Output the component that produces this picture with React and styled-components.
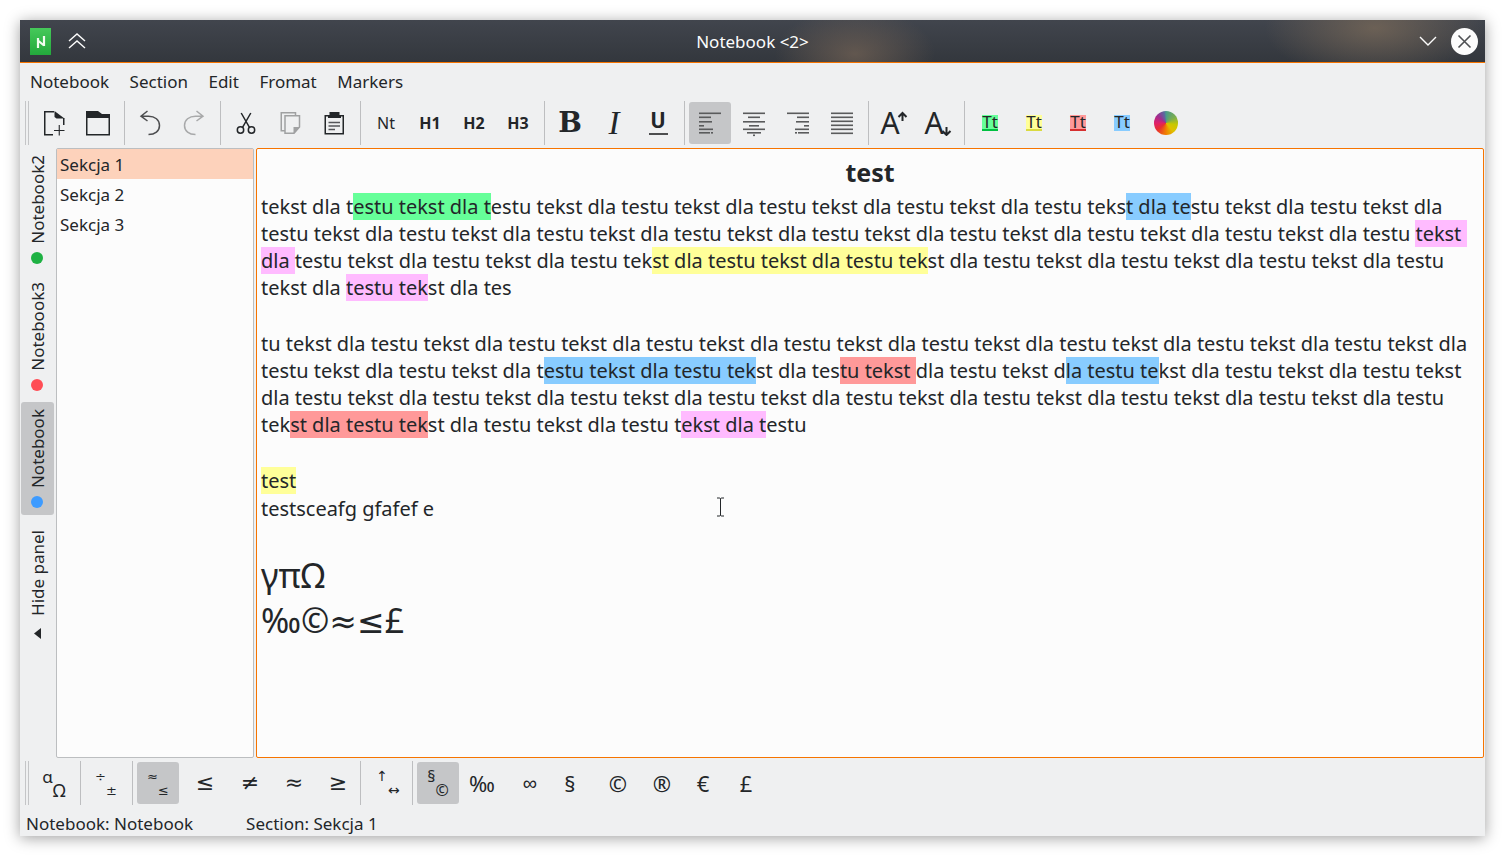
import React from 'react';
import styled, { createGlobalStyle } from 'styled-components';

const Global = createGlobalStyle`
  html, body { margin: 0; padding: 0; background: #fff; overflow: hidden; }
  body { font-family: "Noto Sans", sans-serif; color: #232629; }
`;

const Page = styled.div`
  padding: 20px;
  width: 1465px;
  height: 816px;
`;
const Win = styled.div`
  position: relative;
  width: 1465px;
  height: 816px;
  display: flex;
  flex-direction: column;
  background: #eff0f1;
  box-shadow: 0 2px 14px rgba(0, 0, 0, 0.38);
`;
const TitleBar = styled.header`
  height: 42px;
  flex: none;
  display: flex;
  align-items: center;
  border-bottom: 1px solid #f67400;
  padding: 0 7px 0 10px;
  background:
    radial-gradient(ellipse 110px 52px at 1355px 8px, rgba(125, 108, 90, 0.72), transparent),
    radial-gradient(ellipse 80px 46px at 835px 34px, rgba(125, 105, 88, 0.62), transparent),
    linear-gradient(#41454d, #33373d);
`;
const TitleText = styled.div`
  flex: 1;
  text-align: center;
  color: #fcfcfc;
  font-size: 17px;
  padding-top: 1px;
`;
const TitleIcon = styled.svg`
  display: block;
  flex: none;
  margin-left: ${p => p.$gap || 0}px;
`;
const MenuBar = styled.nav`
  height: 37px;
  flex: none;
  display: flex;
  align-items: center;
  gap: 20.5px;
  padding-left: 10px;
  font-size: 17px;
`;
const ToolBar = styled.div`
  height: 46px;
  flex: none;
  display: flex;
  align-items: center;
`;
const Handle = styled.div`
  width: 2px;
  height: 44px;
  margin: 0 3px 0 5px;
  border-left: 1px solid #c4c5c7;
  border-right: 1px solid #c4c5c7;
`;
const Sep = styled.div`
  width: 1px;
  height: 44px;
  margin: 0 3px 0 4px;
  background: #bdbec0;
  flex: none;
`;
const Btn = styled.div`
  position: relative;
  width: 42px;
  height: 42px;
  margin: 0 1px;
  flex: none;
  box-sizing: border-box;
  display: flex;
  align-items: center;
  justify-content: center;
  border-radius: 3px;
  padding-left: ${p => (p.$shift || 0) * 2}px;
  background: ${p => (p.$active ? '#c5c6c8' : 'transparent')};
`;
const Ico = styled.svg`
  display: block;
  width: 42px;
  height: 42px;
  fill: none;
  stroke: ${p => p.$color || '#232629'};
  stroke-width: 1.5;
`;
const HeadLabel = styled.span`
  font-size: 16px;
  font-weight: ${p => (p.$bold ? 700 : 400)};
`;
const BoldGlyph = styled.span`
  font-family: "DejaVu Serif", serif;
  font-weight: 700;
  font-size: 28px;
  line-height: 1;
`;
const ItalicGlyph = styled.span`
  font-family: "Liberation Serif", serif;
  font-style: italic;
  font-size: 33px;
  line-height: 24px;
  width: 14px;
  text-align: center;
`;
const UnderGlyph = styled.span`
  font-family: Roboto, sans-serif;
  font-weight: 700;
  font-size: 22px;
  line-height: 20px;
  width: 19px;
  text-align: center;
  border-bottom: 2px solid #4d4e4f;
  padding-bottom: 2px;
`;
const FontGlyph = styled.span`
  font-size: 30px;
  line-height: 30px;
  display: flex;
  align-items: center;
`;
const SmallArrow = styled.svg`
  display: block;
  width: 11px;
  height: 26px;
  margin-left: -3px;
  fill: none;
  stroke: #232629;
  stroke-width: 2;
`;
const MarkerGlyph = styled.span`
  width: 16px;
  height: 16px;
  box-sizing: border-box;
  display: flex;
  align-items: center;
  justify-content: center;
  font-size: 17px;
  line-height: 16px;
  background: ${p => p.$bg};
  border-bottom: 2px solid ${p => p.$line};
`;
const Wheel = styled.span`
  width: 24px;
  height: 24px;
  border-radius: 50%;
  background: conic-gradient(#4a9a8a, #7fb04a 60deg, #c8c800 100deg, #e0c000 140deg, #f08000 180deg, #e83030 230deg, #e0206a 270deg, #a02c90 310deg, #5a6aa0 350deg, #4a9a8a);
`;
const Main = styled.div`
  flex: 1;
  min-height: 0;
  display: flex;
  margin-top: 2px;
  padding-right: 1px;
`;
const Strip = styled.aside`
  width: 36px;
  flex: none;
  box-sizing: border-box;
  padding-left: 1px;
  display: flex;
  flex-direction: column;
  gap: 4px;
`;
const Tab = styled.div`
  width: 33px;
  box-sizing: border-box;
  padding: 7px 0 7px;
  margin-top: ${p => p.$push || 0}px;
  display: flex;
  flex-direction: column;
  align-items: center;
  gap: 8px;
  border-radius: 3px;
  background: ${p => (p.$active ? '#c5c6c8' : 'transparent')};
`;
const TabText = styled.span`
  writing-mode: vertical-rl;
  transform: rotate(180deg);
  font-size: 17px;
  line-height: 22px;
  white-space: nowrap;
`;
const Dot = styled.span`
  width: 12px;
  height: 12px;
  border-radius: 50%;
  margin-left: -1px;
  background: ${p => p.$c};
`;
const Tri = styled.svg`
  display: block;
  width: 7px;
  height: 11px;
  margin: 4px 0 0 -1px;
  fill: #232629;
`;
const List = styled.div`
  width: 198px;
  flex: none;
  box-sizing: border-box;
  background: #fcfcfc;
  border: 1px solid #bcbec0;
  border-radius: 2px;
`;
const ListItem = styled.div`
  height: 30px;
  line-height: 32px;
  padding-left: 3px;
  font-size: 17px;
  background: ${p => (p.$on ? '#fdd2bb' : 'transparent')};
`;
const Editor = styled.main`
  flex: 1;
  margin-left: 2px;
  box-sizing: border-box;
  background: #fcfcfc;
  border: 1px solid #f67400;
  border-radius: 2px;
  padding: 3px 4px 0;
  font-size: 19.985px;
`;
const DocTitle = styled.div`
  text-align: center;
  font-weight: 700;
  font-size: 25px;
  line-height: 41px;
  height: 41px;
`;
const Line = styled.div`
  white-space: pre;
  line-height: 27px;
  height: ${p => p.$h || 27}px;
`;
const BigLine = styled.div`
  white-space: pre;
  font-size: 34px;
  line-height: 45px;
  height: 45px;
`;
const Wide = styled.span`
  font-family: "DejaVu Sans", sans-serif;
  font-size: 33px;
`;
const Hl = styled.span`
  background: ${p => p.$c};
`;
const Cursor = styled.svg`
  position: absolute;
  left: 696px;
  top: 477px;
  width: 9px;
  height: 20px;
  fill: none;
  stroke: #232629;
  stroke-width: 1;
`;
const SymbolBar = styled(ToolBar)`
  margin-top: 2px;
`;
const Pair = styled.span`
  display: grid;
  grid-template-columns: auto auto;
  grid-template-rows: 13px 14px;
  height: 27px;
  font-family: ${p => p.$font || '"Noto Sans"'}, sans-serif;
`;
const PairTop = styled.span`
  grid-row: 1;
  grid-column: 1;
  font-size: ${p => p.$size || 15}px;
  line-height: 13px;
`;
const PairBottom = styled.span`
  grid-row: 2;
  grid-column: 2;
  font-size: ${p => p.$size || 15}px;
  line-height: 15px;
`;
const Sym = styled.span`
  font-size: ${p => p.$size || 22}px;
  font-family: ${p => p.$font || '"Noto Sans"'}, sans-serif;
  line-height: 30px;
`;
const Status = styled.footer`
  flex: none;
  height: 30px;
  box-sizing: border-box;
  display: flex;
  align-items: center;
  gap: 53px;
  padding: 4px 0 0 6px;
  font-size: 17px;
`;

const COL = { g: '#66ff99', b: '#88ccff', y: '#ffff99', p: '#ffbbff', r: '#ff9999' };

const rich = s =>
  s.split(/(\[[gbypr]\|[^\]]*\])/).map((part, i) => {
    const m = part.match(/^\[([gbypr])\|([^\]]*)\]$/);
    return m ? <Hl key={i} $c={COL[m[1]]}>{m[2]}</Hl> : <React.Fragment key={i}>{part}</React.Fragment>;
  });

const DOC = [
  ['tekst dla t[g|estu tekst dla t]estu tekst dla testu tekst dla testu tekst dla testu tekst dla testu teks[b|t dla te]stu tekst dla testu tekst dla'],
  ['testu tekst dla testu tekst dla testu tekst dla testu tekst dla testu tekst dla testu tekst dla testu tekst dla testu tekst dla testu [p|tekst ]'],
  ['[p|dla ]testu tekst dla testu tekst dla testu tek[y|st dla testu tekst dla testu tek]st dla testu tekst dla testu tekst dla testu tekst dla testu'],
  ['tekst dla [p|testu tek]st dla tes'],
  [' ', 29],
  ['tu tekst dla testu tekst dla testu tekst dla testu tekst dla testu tekst dla testu tekst dla testu tekst dla testu tekst dla testu tekst dla'],
  ['testu tekst dla testu tekst dla t[b|estu tekst dla testu tek]st dla tes[r|tu tekst ]dla testu tekst d[b|la testu te]kst dla testu tekst dla testu tekst'],
  ['dla testu tekst dla testu tekst dla testu tekst dla testu tekst dla testu tekst dla testu tekst dla testu tekst dla testu tekst dla testu'],
  ['tek[r|st dla testu tek]st dla testu tekst dla testu t[p|ekst dla t]estu'],
  [' ', 29],
  ['[y|test]', 28],
  ['testsceafg gfafef e'],
  [' ', 31],
];

const Rows = ({ rows, color = '#5a5b5c' }) => (
  <Ico viewBox="0 0 42 42">
    {rows.map(([x, y, w], i) => (
      <rect key={i} x={x} y={y} width={w} height="1.6" fill={color} stroke="none" />
    ))}
  </Ico>
);

const NewIcon = () => (
  <Ico viewBox="0 0 42 42">
    <path d="M21 9.75H11.75V32.75H20M30.75 16V23" />
    <path d="M21.5 9L31.5 16.5H23.5L21.5 15Z" fill="#232629" stroke="none" />
    <path d="M21 28.5H31.5M26.25 23V33.5" strokeWidth="1.1" />
  </Ico>
);
const FolderIcon = () => (
  <Ico viewBox="0 0 42 42">
    <path d="M9 9H21L25 12H33V16H9Z" fill="#232629" stroke="none" />
    <path d="M9.75 15V32.75H32.25V15" />
  </Ico>
);
const UndoIcon = ({ color }) => (
  <Ico viewBox="0 0 42 42" $color={color}>
    <path d="M18.5 9L12 14.2L18.5 19M12 14.2H19.5C26 14.2 30.5 18 30.5 23.5C30.5 29 26 32.5 19.5 32.5" />
  </Ico>
);
const RedoIcon = ({ color }) => (
  <Ico viewBox="0 0 42 42" $color={color}>
    <path d="M23.5 9L30 14.2L23.5 19M30 14.2H22.5C16 14.2 11.5 18 11.5 23.5C11.5 29 16 32.5 22.5 32.5" />
  </Ico>
);
const CutIcon = () => (
  <Ico viewBox="0 0 42 42">
    <circle cx="15.5" cy="28" r="3.2" />
    <circle cx="26.5" cy="28" r="3.2" />
    <path d="M16.2 11L24.6 25.6M25.8 11L17.4 25.6" />
  </Ico>
);
const CopyIcon = () => (
  <Ico viewBox="0 0 42 42" $color="#a0a1a2">
    <path d="M16 28.75H12.25V10.75H26.5V13.5" />
    <path d="M16 13.75H30.5V25L25 31.25H16Z" />
    <path d="M24.5 25H31L24.5 32Z" fill="#a0a1a2" stroke="none" />
  </Ico>
);
const PasteIcon = () => (
  <Ico viewBox="0 0 42 42">
    <path d="M16 13.75H12.25V31.75H30.25V13.75H27" />
    <path d="M16.5 10H26.5V13H28V16H15V13H16.5Z" fill="#232629" stroke="none" />
    <path d="M15.5 20.5H27M15.5 24H27M15.5 27.5H22" strokeWidth="1.3" stroke="#55565a" />
  </Ico>
);

const Marker = ({ bg, line }) => (
  <Btn>
    <MarkerGlyph $bg={bg} $line={line}>Tt</MarkerGlyph>
  </Btn>
);

export default function App() {
  return (
    <Page>
      <Global />
      <Win>
        <TitleBar>
          <TitleIcon width="21" height="27" viewBox="0 0 21 27">
            <defs>
              <linearGradient id="lg" x1="0" y1="0" x2="0" y2="1">
                <stop offset="0" stopColor="#46c95a" />
                <stop offset="1" stopColor="#23a93c" />
              </linearGradient>
            </defs>
            <rect width="21" height="27" fill="url(#lg)" />
            <path d="M8 20V10M8 12.5L14 17.5M14 8V18" fill="none" stroke="#f2fdf0" strokeWidth="2.2" />
          </TitleIcon>
          <TitleIcon width="18" height="16" viewBox="0 0 18 16" $gap={17}>
            <path d="M1 8L9 1L17 8M1 15L9 8L17 15" fill="none" stroke="#fcfcfc" strokeWidth="1.4" />
          </TitleIcon>
          <TitleText>Notebook &lt;2&gt;</TitleText>
          <TitleIcon width="18" height="10" viewBox="0 0 18 10">
            <path d="M1 1L9 9L17 1" fill="none" stroke="#fcfcfc" strokeWidth="1.4" />
          </TitleIcon>
          <TitleIcon width="27" height="27" viewBox="0 0 27 27" $gap={14}>
            <circle cx="13.5" cy="13.5" r="13.5" fill="#fcfcfc" />
            <path d="M7.5 7.5L19.5 19.5M19.5 7.5L7.5 19.5" stroke="#4d4f52" strokeWidth="1.6" />
          </TitleIcon>
        </TitleBar>

        <MenuBar>
          <span>Notebook</span>
          <span>Section</span>
          <span>Edit</span>
          <span>Fromat</span>
          <span>Markers</span>
        </MenuBar>

        <ToolBar>
          <Handle />
          <Btn><NewIcon /></Btn>
          <Btn><FolderIcon /></Btn>
          <Sep />
          <Btn><UndoIcon color="#4d4e50" /></Btn>
          <Btn><RedoIcon color="#a8a9aa" /></Btn>
          <Sep />
          <Btn><CutIcon /></Btn>
          <Btn><CopyIcon /></Btn>
          <Btn><PasteIcon /></Btn>
          <Sep />
          <Btn><HeadLabel>Nt</HeadLabel></Btn>
          <Btn><HeadLabel $bold>H1</HeadLabel></Btn>
          <Btn><HeadLabel $bold>H2</HeadLabel></Btn>
          <Btn><HeadLabel $bold>H3</HeadLabel></Btn>
          <Sep />
          <Btn><BoldGlyph>B</BoldGlyph></Btn>
          <Btn><ItalicGlyph>I</ItalicGlyph></Btn>
          <Btn><UnderGlyph>U</UnderGlyph></Btn>
          <Sep />
          <Btn $active><Rows rows={[[10, 10.5, 22], [10, 14.5, 12], [10, 19, 13], [10, 23, 5], [10, 26.5, 14], [10, 30, 11], [22, 30, 2]]} /></Btn>
          <Btn><Rows rows={[[10, 10.5, 22], [15, 14.5, 12], [10, 19, 22], [16, 23, 10], [10, 26.5, 22], [14, 30, 14], [20, 32.5, 2]]} /></Btn>
          <Btn><Rows rows={[[10, 10.5, 22], [20, 14.5, 12], [19, 19, 13], [27, 23, 5], [18, 26.5, 14], [21, 30, 11], [18, 30, 2]]} /></Btn>
          <Btn><Rows rows={[[10, 10.5, 22], [10, 14.5, 22], [10, 18.5, 22], [10, 22.5, 22], [10, 26.5, 22], [10, 30.5, 22]]} /></Btn>
          <Sep />
          <Btn>
            <FontGlyph>A<SmallArrow viewBox="0 0 11 26"><path d="M5.5 11V3.2M1.5 7L5.5 3L9.5 7" /></SmallArrow></FontGlyph>
          </Btn>
          <Btn>
            <FontGlyph>A<SmallArrow viewBox="0 0 11 26"><path d="M5.5 17V24.8M1.5 21L5.5 25L9.5 21" /></SmallArrow></FontGlyph>
          </Btn>
          <Sep />
          <Marker bg="#66ff99" line="#00c040" />
          <Marker bg="#ffff99" line="#dada40" />
          <Marker bg="#ff9999" line="#d63030" />
          <Marker bg="#88ccff" line="#88ccff" />
          <Btn><Wheel /></Btn>
        </ToolBar>

        <Main>
          <Strip>
            <Tab><TabText>Notebook2</TabText><Dot $c="#1eb143" /></Tab>
            <Tab><TabText>Notebook3</TabText><Dot $c="#ff4d55" /></Tab>
            <Tab $active><TabText>Notebook</TabText><Dot $c="#3d9bff" /></Tab>
            <Tab $push={4}><TabText>Hide panel</TabText><Tri viewBox="0 0 7 11"><path d="M7 0V11L0 5.5Z" /></Tri></Tab>
          </Strip>
          <List>
            <ListItem $on>Sekcja 1</ListItem>
            <ListItem>Sekcja 2</ListItem>
            <ListItem>Sekcja 3</ListItem>
          </List>
          <Editor>
            <DocTitle>test</DocTitle>
            {DOC.map(([l, h], i) => <Line key={i} $h={h}>{rich(l)}</Line>)}
            <BigLine>γπΩ</BigLine>
            <BigLine>‰©<Wide>≈≤</Wide>£</BigLine>
          </Editor>
        </Main>

        <SymbolBar>
          <Handle />
          <Btn><Pair><PairTop $size={17}>α</PairTop><PairBottom $size={18}>Ω</PairBottom></Pair></Btn>
          <Sep />
          <Btn><Pair $font='"DejaVu Sans"'><PairTop $size={13}>÷</PairTop><PairBottom $size={13}>±</PairBottom></Pair></Btn>
          <Sep />
          <Btn $active><Pair $font='"DejaVu Sans"'><PairTop $size={13}>≈</PairTop><PairBottom $size={13}>≤</PairBottom></Pair></Btn>
          <Btn $shift={3}><Sym $font='"DejaVu Sans"'>≤</Sym></Btn>
          <Btn $shift={4}><Sym $font='"DejaVu Sans"'>≠</Sym></Btn>
          <Btn $shift={4}><Sym $font='"DejaVu Sans"'>≈</Sym></Btn>
          <Btn $shift={4}><Sym $font='"DejaVu Sans"'>≥</Sym></Btn>
          <Sep />
          <Btn $shift={2}><Pair $font='"DejaVu Sans"'><PairTop $size={14}>↑</PairTop><PairBottom $size={14}>↔</PairBottom></Pair></Btn>
          <Sep />
          <Btn $active><Pair><PairTop $size={16}>§</PairTop><PairBottom $size={16}>©</PairBottom></Pair></Btn>
          <Btn><Sym>‰</Sym></Btn>
          <Btn $shift={4}><Sym $size={20}>∞</Sym></Btn>
          <Btn><Sym>§</Sym></Btn>
          <Btn $shift={4}><Sym>©</Sym></Btn>
          <Btn $shift={4}><Sym>®</Sym></Btn>
          <Btn $shift={1}><Sym>€</Sym></Btn>
          <Btn><Sym>£</Sym></Btn>
        </SymbolBar>

        <Status>
          <span>Notebook: Notebook</span>
          <span>Section: Sekcja 1</span>
        </Status>

        <Cursor viewBox="0 0 9 20">
          <path d="M1 1H3.5C4 1 4.5 1.5 4.5 2V18C4.5 18.5 4 19 3.5 19H1M8 1H5.5C5 1 4.5 1.5 4.5 2M4.5 18C4.5 18.5 5 19 5.5 19H8" />
        </Cursor>
      </Win>
    </Page>
  );
}
